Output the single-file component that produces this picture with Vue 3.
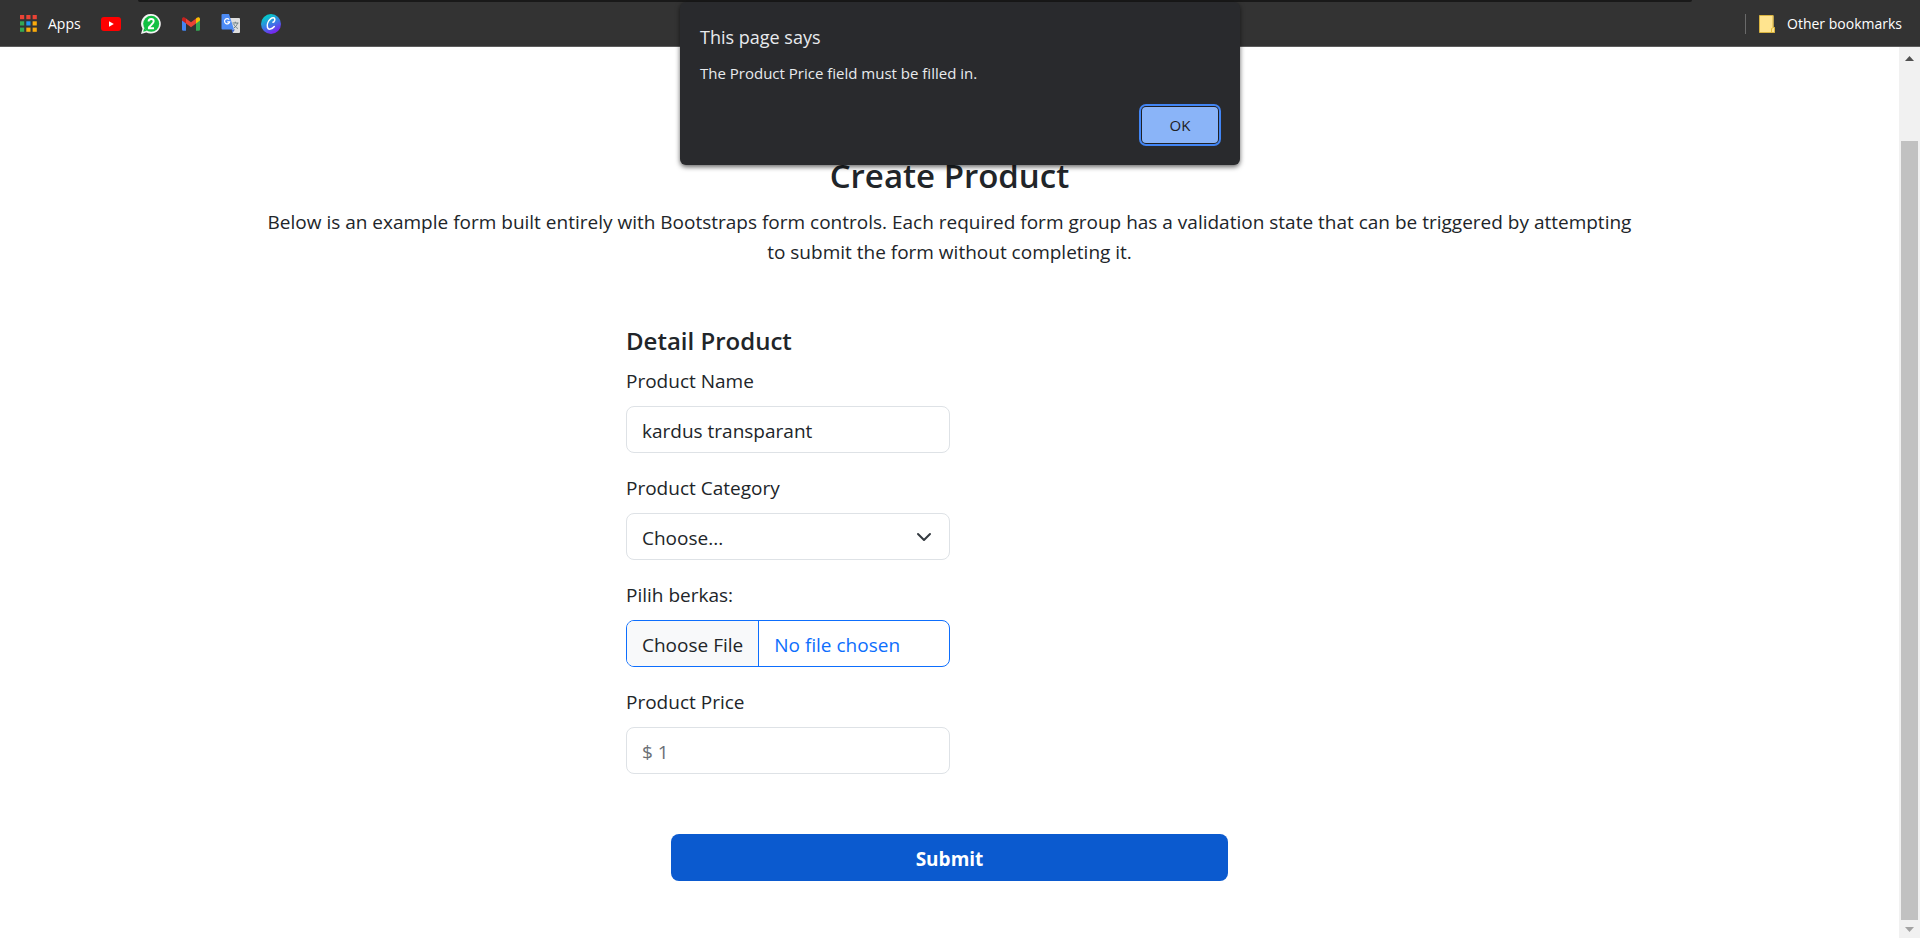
<script setup>
import { ref } from 'vue'

const productName = ref('kardus transparant')
const category = ref('')
const price = ref('')
const tiles = [
  '#ea4335', '#ea4335', '#ea4335',
  '#34a853', '#2196f3', '#fbab0c',
  '#34a853', '#fbab0c', '#fbab0c',
]
</script>

<template>
  <div class="browser">
    <nav class="bookmarks" aria-label="Bookmarks">
      <div class="toolbar-edge"></div>
      <a class="bookmark apps" href="#">
        <svg width="17" height="17" viewBox="0 0 17 17" aria-hidden="true">
          <rect
            v-for="(color, i) in tiles"
            :key="i"
            :x="(i % 3) * 6.3"
            :y="Math.floor(i / 3) * 6.3"
            width="4.2"
            height="4.2"
            :fill="color"
          />
        </svg>
        <span>Apps</span>
      </a>
      <a class="bookmark" href="#" aria-label="YouTube">
        <svg width="20" height="20" viewBox="0 0 20 20">
          <rect y="3" width="20" height="14" rx="3" fill="#f00" />
          <path d="M8 7.2v5.6l4.8-2.8z" fill="#fff" />
        </svg>
      </a>
      <a class="bookmark" href="#" aria-label="WhatsApp">
        <svg width="20" height="20" viewBox="0 0 20 20">
          <path d="M10.2 0a9.8 9.8 0 1 1-4.9 18.4L0 20l1.5-5.2A9.8 9.8 0 0 1 10.2 0z" fill="#f4f4f4" />
          <circle cx="10.2" cy="9.8" r="8" fill="#12c143" />
          <path d="M2.2 17.8l1-3.8 2.8 2.8z" fill="#12c143" />
          <path d="M7.6 7.6c0-1.6 1.1-2.6 2.6-2.6s2.5.9 2.5 2.3c0 1.1-.6 1.8-1.9 3L7.9 13.4v.8H13" fill="none" stroke="#fff" stroke-width="1.9" />
        </svg>
      </a>
      <a class="bookmark" href="#" aria-label="Gmail">
        <svg width="20" height="20" viewBox="0 0 20 20">
          <path d="M1 6v9.5c0 .8.5 1.2 1.2 1.2H5V8.500z" fill="#4285f4" />
          <path d="M15 8.500v8.200h2.800c.7 0 1.200-.4 1.200-1.200V6z" fill="#34a853" />
          <path d="M15 4.500v5l4-3V5c0-1.900-2-2.300-3.200-1.200z" fill="#fbbc04" />
          <path d="M5 4.500l5 3.800 5-3.800v5l-5 3.800-5-3.800z" fill="#ea4335" />
          <path d="M1 5v1.500l4 3v-5l-.8-.7C2.900 2.800 1 3.300 1 5z" fill="#c5221f" />
        </svg>
      </a>
      <a class="bookmark" href="#" aria-label="Google Translate">
        <svg width="20" height="20" viewBox="0 0 20 20">
          <path d="M8 4h10a1 1 0 0 1 1 1v13a1 1 0 0 1-1 1h-6z" fill="#dedede" />
          <path d="M10.500 15.500H14L11.500 19z" fill="#3a62c8" />
          <path d="M1.500 0H8l5 15.500H1.500A1 1 0 0 1 .5 14.500V1a1 1 0 0 1 1-1z" fill="#4c8bf5" />
          <path d="M8.200 5.700A2.600 2.600 0 1 0 8.700 7.800H6.200" fill="none" stroke="#fff" stroke-width="1.200" />
          <path d="M11.500 9h6M14.300 7.700V9M16.500 9c-.4 2.200-2 4-3.600 5M12.700 10c.8 2 2.300 3.600 4.200 4.500" fill="none" stroke="#6b7f86" stroke-width="1" />
        </svg>
      </a>
      <a class="bookmark" href="#" aria-label="Canva">
        <svg width="20" height="20" viewBox="0 0 20 20">
          <defs>
            <linearGradient id="canva" x1="0.200" y1="0" x2="0.700" y2="1">
              <stop offset="0.150" stop-color="#08c4cc" />
              <stop offset="0.550" stop-color="#3c78e6" />
              <stop offset="0.900" stop-color="#7429ee" />
            </linearGradient>
          </defs>
          <circle cx="10" cy="10" r="10" fill="url(#canva)" />
          <path d="M12 8.200c1.200-.4 2.200-2.200 1.700-3.500-.5-1.300-2.400-1.200-4.100.2C7 7 5.700 10.800 6.500 13.500c.8 2.500 4.300 2.100 6.800-1" fill="none" stroke="#fff" stroke-width="1.500" stroke-linecap="round" />
        </svg>
      </a>
      <a class="bookmark other" href="#">
        <svg width="16" height="18" viewBox="0 0 16 18" aria-hidden="true">
          <path d="M.5.500h14v12H16v5H.5z" fill="#ffe48f" />
          <path d="M.5.500h13.500v12h1.500v5H.5z" fill="none" stroke="#d9b441" />
          <path d="M12.500 17v-3.500l2-1" fill="none" stroke="#e6bf33" />
        </svg>
        <span>Other bookmarks</span>
      </a>
    </nav>

    <div class="viewport">
      <main class="page">
        <header class="intro">
          <h1>Create Product</h1>
          <p>
            Below is an example form built entirely with Bootstraps form controls. Each required
            form group has a validation state that can be triggered by attempting to submit the
            form without completing it.
          </p>
        </header>

        <form class="product-form" @submit.prevent>
          <h2>Detail Product</h2>
          <div class="field">
            <label for="name">Product Name</label>
            <input id="name" v-model="productName" class="control" type="text" />
          </div>
          <div class="field">
            <label for="category">Product Category</label>
            <select id="category" v-model="category" class="control">
              <option value="">Choose...</option>
            </select>
          </div>
          <div class="field">
            <label for="file">Pilih berkas:</label>
            <input id="file" class="control file" type="file" />
          </div>
          <div class="field">
            <label for="price">Product Price</label>
            <input id="price" v-model="price" class="control" type="text" placeholder="$ 1" />
          </div>
          <button class="submit" type="submit">Submit</button>
        </form>
      </main>

      <div class="scrollbar" aria-hidden="true">
        <svg width="9" height="5" viewBox="0 0 9 5"><path d="M0 5L4.500 0 9 5z" fill="#505050" /></svg>
        <div class="thumb"></div>
        <svg width="9" height="5" viewBox="0 0 9 5"><path d="M0 0h9L4.500 5z" fill="#a3a3a3" /></svg>
      </div>
    </div>

    <div class="dialog" role="alertdialog" aria-labelledby="dialog-title" aria-describedby="dialog-text">
      <h2 id="dialog-title">This page says</h2>
      <p id="dialog-text">The Product Price field must be filled in.</p>
      <button class="ok" type="button">OK</button>
    </div>
  </div>
</template>

<style>
body {
  margin: 0;
}
</style>

<style scoped>
* {
  box-sizing: border-box;
}

.browser {
  position: relative;
  display: flex;
  flex-direction: column;
  min-height: 100vh;
  background: #fff;
  color: #212529;
  font-family: "Open Sans", "Noto Sans", sans-serif;
  font-size: 19px;
  line-height: 30px;
}

.bookmarks {
  position: relative;
  display: flex;
  align-items: center;
  gap: 20px;
  height: 47px;
  padding: 1px 18px 0 20px;
  border-bottom: 1px solid #5c5c5c;
  background: #333;
}

.toolbar-edge {
  position: absolute;
  top: 0;
  left: 138px;
  right: 228px;
  height: 2px;
  border-radius: 0 0 8px 8px;
  background: #191919;
}

.bookmark {
  display: flex;
  align-items: center;
  color: #fff;
  font-size: 14px;
  line-height: 20px;
  text-decoration: none;
}

.bookmark svg {
  display: block;
}

.apps {
  gap: 11px;
}

.other {
  gap: 12px;
  height: 20px;
  margin-left: auto;
  padding-left: 13px;
  border-left: 1px solid #6a6a6a;
}

.viewport {
  display: flex;
  flex: 1;
}

.page {
  flex: 1;
  padding: 108px 15px 57px;
}

.intro {
  max-width: 1375px;
  margin: 0 auto;
  text-align: center;
}

.intro h1 {
  margin: 0 0 10px;
  font-size: 33px;
  font-weight: 600;
  line-height: 42px;
}

.intro p {
  margin: 0;
}

.product-form {
  display: flex;
  flex-direction: column;
  align-items: flex-start;
  max-width: 647px;
  margin: 59px auto 0;
}

.product-form h2 {
  margin: 0 0 10px;
  font-size: 24px;
  font-weight: 600;
  line-height: 30px;
}

.field {
  display: flex;
  flex-direction: column;
  gap: 10px;
  width: 50%;
  margin-bottom: 20px;
}

.control {
  width: 100%;
  height: 47px;
  padding: 9px 15px 7px;
  border: 1px solid #dee2e6;
  border-radius: 8px;
  outline: none;
  background: #fff;
  color: #212529;
  font: inherit;
}

.control::placeholder {
  color: #6b6f75;
  opacity: 1;
}

select.control {
  appearance: none;
  background: url("data:image/svg+xml,%3Csvg xmlns='http://www.w3.org/2000/svg' viewBox='0 0 16 16'%3E%3Cpath fill='none' stroke='%23343a40' stroke-linecap='round' stroke-linejoin='round' stroke-width='2' d='m2 5 6 6 6-6'/%3E%3C/svg%3E") no-repeat right 17px center / 16px 16px;
}

.file {
  overflow: hidden;
  border-color: #0d6efd;
  color: #0d6efd;
}

.file::file-selector-button {
  height: 45px;
  margin: -9px 15px -7px -15px;
  padding: 9px 15px 7px;
  border: 0 solid #0d6efd;
  border-right-width: 1px;
  background: #f8f9fa;
  color: #212529;
  font: inherit;
}

.submit {
  align-self: stretch;
  height: 47px;
  margin: 40px 45px 0;
  padding: 2px 15px 0;
  border: 0;
  border-radius: 8px;
  background: #0b5acf;
  color: #fff;
  font: inherit;
  font-weight: 700;
}

.scrollbar {
  display: flex;
  flex-direction: column;
  align-items: center;
  width: 21px;
  padding: 9px 2px 6px;
  background: #f1f1f1;
}

.thumb {
  flex: 1;
  align-self: stretch;
  margin: 80px 0 7px;
  background: #c1c1c1;
}

.dialog {
  position: absolute;
  top: 2px;
  left: 50%;
  display: flex;
  flex-direction: column;
  width: 560px;
  padding: 20px 20px 22px;
  border-radius: 6px;
  background: #292a2d;
  box-shadow: 0 2px 5px rgba(0, 0, 0, 0.6);
  color: #e8eaed;
  transform: translateX(-50%);
}

.dialog h2 {
  margin: 0;
  font-size: 18px;
  font-weight: 400;
  line-height: 30px;
}

.dialog p {
  margin: 9px 0 0;
  font-size: 15px;
  line-height: 24px;
}

.ok {
  align-self: flex-end;
  width: 76px;
  height: 36px;
  margin: 22px 2px 0 0;
  border: 0;
  border-radius: 4px;
  background: #8ab4f8;
  box-shadow: 0 0 0 1px #202124, 0 0 0 3px #4285f4;
  color: #202124;
  font: inherit;
  font-size: 15px;
}
</style>
